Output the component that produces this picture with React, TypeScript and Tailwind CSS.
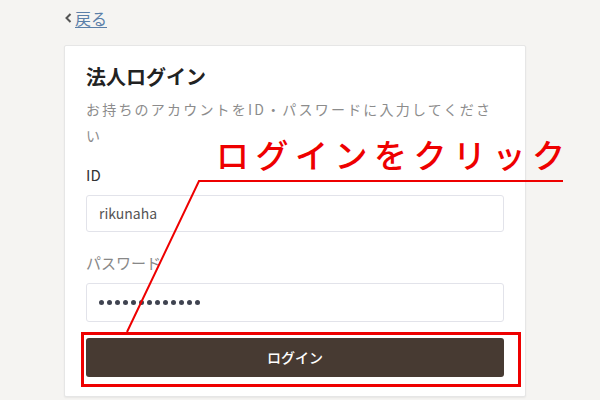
import React from "react";

export default function App() {
  const dots = Array.from({ length: 13 });
  return (
    <div
      className="relative w-[600px] h-[400px] overflow-hidden bg-[#f5f4f2]"
      style={{ fontFamily: '"Noto Sans CJK JP", "Noto Sans", sans-serif' }}
    >
      <div className="pl-[63px] pt-[7px] h-[45px] flex items-start">
        <a className="flex items-center text-[16px] leading-[22px] text-[#5b7fa8] cursor-pointer">
          <svg width="11" height="12" viewBox="0 0 11 12" className="mr-[1px]">
            <path d="M7.5 2 L3.5 6 L7.5 10" fill="none" stroke="#555" strokeWidth="2" />
          </svg>
          <span className="underline underline-offset-2">戻る</span>
        </a>
      </div>

      <div className="ml-[64px] w-[462px] bg-white border border-[#e6e6e6] rounded-[2px] px-[21px] pt-[17px] pb-[19px] shadow-[0_1px_2px_rgba(0,0,0,0.06)]">
        <h1 className="text-[20px] leading-[28px] font-bold text-[#222]">法人ログイン</h1>
        <p className="mt-[5px] text-[14px] leading-[26px] text-[#8c8c8c] tracking-[2.2px] whitespace-nowrap">
          お持ちのアカウントをID・パスワードに入力してくださ
          <br />い
        </p>
        <div className="mt-[17px] text-[15px] leading-[20px] text-[#333]">ID</div>
        <div className="mt-[10px] h-[37px] w-[418px] border border-[#e2e3ea] rounded-[3px] flex items-center px-[12px] text-[14px] text-[#555]">
          rikunaha
        </div>
        <div className="mt-[21px] text-[15px] leading-[20px] text-[#888]">パスワード</div>
        <div className="mt-[10px] h-[39px] w-[418px] border border-[#e2e3ea] rounded-[3px] flex items-center gap-[3px] px-[12px]">
          {dots.map((_, i) => (
            <span key={i} className="w-[5px] h-[5px] rounded-full bg-[#3f4350]" />
          ))}
        </div>
        <button className="mt-[16px] h-[39px] w-[418px] rounded-[3px] bg-[#473a32] text-white text-[14px] font-medium">
          ログイン
        </button>
      </div>

      {/* annotation overlay */}
      <div className="absolute left-[216px] top-[132px] text-[33px] leading-[44px] font-medium text-[#ee0000] tracking-[6.5px] whitespace-nowrap">
        ログインをクリック
      </div>
      <svg className="absolute left-0 top-0" width="600" height="400" viewBox="0 0 600 400">
        <polyline points="127,332 199,181 563,181" fill="none" stroke="#ee0000" strokeWidth="2" />
        <rect x="82.5" y="333.5" width="437" height="52" fill="none" stroke="#ee0000" strokeWidth="3" />
      </svg>
    </div>
  );
}
